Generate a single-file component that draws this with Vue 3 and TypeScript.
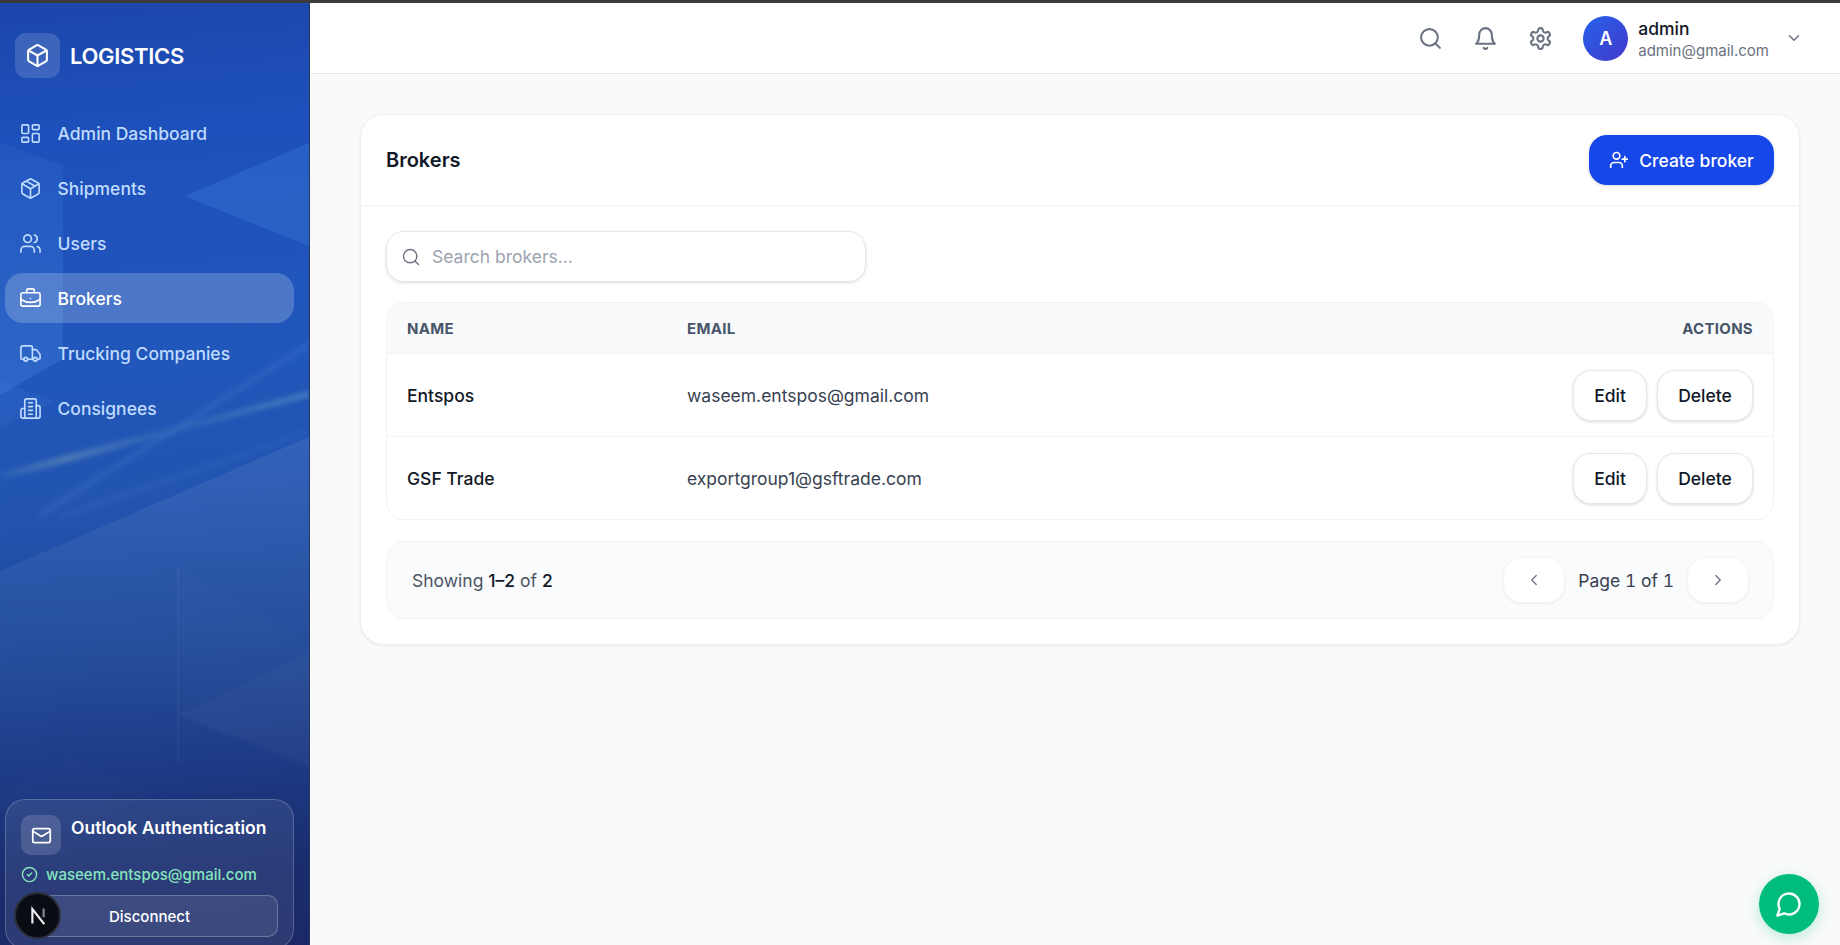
<script setup lang="ts">
interface NavItem {
  label: string
  icon: string
  active?: boolean
}

interface Broker {
  name: string
  email: string
}

const navItems: NavItem[] = [
  { label: 'Admin Dashboard', icon: 'dashboard' },
  { label: 'Shipments', icon: 'package' },
  { label: 'Users', icon: 'users' },
  { label: 'Brokers', icon: 'briefcase', active: true },
  { label: 'Trucking Companies', icon: 'truck' },
  { label: 'Consignees', icon: 'building' },
]

const brokers: Broker[] = [
  { name: 'Entspos', email: 'waseem.entspos@gmail.com' },
  { name: 'GSF Trade', email: 'exportgroup1@gsftrade.com' },
]
</script>

<template>
  <div class="page">
    <div class="browser-line"></div>
    <div class="shell">
      <aside class="sidebar">
        <svg class="sidebar-art" viewBox="0 0 310 942" preserveAspectRatio="none" aria-hidden="true">
          <defs>
            <linearGradient id="streak" x1="0" y1="1" x2="1" y2="0">
              <stop offset="0" stop-color="#9fd8d0" stop-opacity="0.05" />
              <stop offset="0.22" stop-color="#b8dcb8" stop-opacity="0.3" />
              <stop offset="0.55" stop-color="#9fd8d0" stop-opacity="0.08" />
              <stop offset="1" stop-color="#9fd8d0" stop-opacity="0.3" />
            </linearGradient>
            <linearGradient id="band" x1="0" y1="0" x2="0" y2="1">
              <stop offset="0" stop-color="#ffffff" stop-opacity="0.075" />
              <stop offset="1" stop-color="#ffffff" stop-opacity="0" />
            </linearGradient>
            <linearGradient id="left-shape" x1="0" y1="0" x2="0" y2="1">
              <stop offset="0" stop-color="#60a5fa" stop-opacity="0.08" />
              <stop offset="1" stop-color="#60a5fa" stop-opacity="0.2" />
            </linearGradient>
            <filter id="soft" x="-10%" y="-50%" width="120%" height="200%">
              <feGaussianBlur stdDeviation="2.4" />
            </filter>
          </defs>
          <polygon points="0,139 63,163 63,356 0,392" fill="url(#left-shape)" />
          <polygon points="185,193 310,140 310,243" fill="#60a5fa" opacity="0.17" />
          <polygon points="0,378 55,398 0,425" fill="#60a5fa" opacity="0.08" />
          <polygon points="0,470 310,388 310,394 0,477" fill="url(#streak)" filter="url(#soft)" />
          <polygon points="40,508 310,338 310,345 40,516" fill="#93c5fd" opacity="0.09" filter="url(#soft)" />
          <polygon points="60,510 310,425 310,432 60,518" fill="#93c5fd" opacity="0.05" filter="url(#soft)" />
          <polygon points="0,568 310,434 310,790 0,800" fill="url(#band)" />
          <polygon points="178,562 310,640 310,760 178,712" fill="#ffffff" opacity="0.012" />
          <polygon points="178,565 179,565 179,760 178,760" fill="#ffffff" opacity="0.07" />
          <polygon points="178,712 310,650 310,765" fill="#ffffff" opacity="0.025" />
          <polygon points="0,790 70,755 155,790 70,830 0,810" fill="#ffffff" opacity="0.012" />
        </svg>

        <div class="brand">
          <span class="brand-mark">
            <svg class="icon brand-icon" viewBox="0 0 24 24">
              <path d="M11 21.73a2 2 0 0 0 2 0l7-4A2 2 0 0 0 21 16V8a2 2 0 0 0-1-1.73l-7-4a2 2 0 0 0-2 0l-7 4A2 2 0 0 0 3 8v8a2 2 0 0 0 1 1.73z" />
              <path d="m3.3 7 8.7 5 8.7-5" />
              <path d="M12 22V12" />
            </svg>
          </span>
          <span class="brand-name">LOGISTICS</span>
        </div>

        <nav class="nav">
          <a v-for="item in navItems" :key="item.label" class="nav-item" :class="{ active: item.active }">
            <svg class="icon nav-icon" viewBox="0 0 24 24">
              <template v-if="item.icon === 'dashboard'">
                <rect x="3" y="3" width="7" height="9" rx="1" />
                <rect x="14" y="3" width="7" height="5" rx="1" />
                <rect x="14" y="12" width="7" height="9" rx="1" />
                <rect x="3" y="16" width="7" height="5" rx="1" />
              </template>
              <template v-else-if="item.icon === 'package'">
                <path d="M11 21.73a2 2 0 0 0 2 0l7-4A2 2 0 0 0 21 16V8a2 2 0 0 0-1-1.73l-7-4a2 2 0 0 0-2 0l-7 4A2 2 0 0 0 3 8v8a2 2 0 0 0 1 1.73z" />
                <path d="M12 22V12" />
                <path d="m3.3 7 7.703 4.734a2 2 0 0 0 1.994 0L20.7 7" />
                <path d="m7.5 4.27 9 5.15" />
              </template>
              <template v-else-if="item.icon === 'users'">
                <path d="M16 21v-2a4 4 0 0 0-4-4H6a4 4 0 0 0-4 4v2" />
                <circle cx="9" cy="7" r="4" />
                <path d="M22 21v-2a4 4 0 0 0-3-3.87" />
                <path d="M16 3.13a4 4 0 0 1 0 7.75" />
              </template>
              <template v-else-if="item.icon === 'briefcase'">
                <path d="M12 12h.01" />
                <path d="M16 6V4a2 2 0 0 0-2-2h-4a2 2 0 0 0-2 2v2" />
                <path d="M22 13a18.15 18.15 0 0 1-20 0" />
                <rect x="2" y="6" width="20" height="14" rx="2" />
              </template>
              <template v-else-if="item.icon === 'truck'">
                <path d="M14 18V6a2 2 0 0 0-2-2H4a2 2 0 0 0-2 2v11a1 1 0 0 0 1 1h2" />
                <path d="M15 18H9" />
                <path d="M19 18h2a1 1 0 0 0 1-1v-3.65a1 1 0 0 0-.22-.624l-3.48-4.35A1 1 0 0 0 17.52 8H14" />
                <circle cx="17" cy="18" r="2" />
                <circle cx="7" cy="18" r="2" />
              </template>
              <template v-else>
                <path d="M6 22V4a2 2 0 0 1 2-2h8a2 2 0 0 1 2 2v18Z" />
                <path d="M6 12H4a2 2 0 0 0-2 2v6a2 2 0 0 0 2 2h2" />
                <path d="M18 9h2a2 2 0 0 1 2 2v9a2 2 0 0 1-2 2h-2" />
                <path d="M10 6h4" />
                <path d="M10 10h4" />
                <path d="M10 14h4" />
                <path d="M10 18h4" />
              </template>
            </svg>
            <span>{{ item.label }}</span>
          </a>
        </nav>

        <section class="auth-card">
          <div class="auth-head">
            <span class="auth-mark">
              <svg class="icon auth-icon" viewBox="0 0 24 24">
                <rect x="2" y="4" width="20" height="16" rx="2" />
                <path d="m22 7-8.97 5.7a1.94 1.94 0 0 1-2.06 0L2 7" />
              </svg>
            </span>
            <span class="auth-title">Outlook Authentication</span>
          </div>
          <div class="auth-email">
            <svg class="icon check-icon" viewBox="0 0 24 24">
              <circle cx="12" cy="12" r="10" />
              <path d="m9 12 2 2 4-4" />
            </svg>
            <span>waseem.entspos@gmail.com</span>
          </div>
          <button class="disconnect" type="button">Disconnect</button>
        </section>

        <div class="next-badge">
          <svg viewBox="0 0 24 24" class="next-logo">
            <path d="M7.5 18V6.5L17 18.5" />
            <path class="next-stem" d="M16.5 6v7" />
          </svg>
        </div>
      </aside>

      <div class="main">
        <header class="topbar">
          <svg class="icon top-icon" viewBox="0 0 24 24">
            <circle cx="11" cy="11" r="8" />
            <path d="m21 21-4.3-4.3" />
          </svg>
          <svg class="icon top-icon" viewBox="0 0 24 24">
            <path d="M6 8a6 6 0 0 1 12 0c0 7 3 9 3 9H3s3-2 3-9" />
            <path d="M10.3 21a1.94 1.94 0 0 0 3.4 0" />
          </svg>
          <svg class="icon top-icon" viewBox="0 0 24 24">
            <path d="M12.22 2h-.44a2 2 0 0 0-2 2v.18a2 2 0 0 1-1 1.73l-.43.25a2 2 0 0 1-2 0l-.15-.08a2 2 0 0 0-2.73.73l-.22.38a2 2 0 0 0 .73 2.73l.15.1a2 2 0 0 1 1 1.72v.51a2 2 0 0 1-1 1.74l-.15.09a2 2 0 0 0-.73 2.73l.22.38a2 2 0 0 0 2.73.73l.15-.08a2 2 0 0 1 2 0l.43.25a2 2 0 0 1 1 1.73V20a2 2 0 0 0 2 2h.44a2 2 0 0 0 2-2v-.18a2 2 0 0 1 1-1.73l.43-.25a2 2 0 0 1 2 0l.15.08a2 2 0 0 0 2.73-.73l.22-.39a2 2 0 0 0-.73-2.73l-.15-.08a2 2 0 0 1-1-1.74v-.5a2 2 0 0 1 1-1.74l.15-.09a2 2 0 0 0 .73-2.73l-.22-.38a2 2 0 0 0-2.73-.73l-.15.08a2 2 0 0 1-2 0l-.43-.25a2 2 0 0 1-1-1.73V4a2 2 0 0 0-2-2z" />
            <circle cx="12" cy="12" r="3" />
          </svg>
          <div class="account">
            <span class="avatar">A</span>
            <div class="account-text">
              <span class="account-name">admin</span>
              <span class="account-email">admin@gmail.com</span>
            </div>
            <svg class="icon account-chevron" viewBox="0 0 24 24">
              <path d="m6 9 6 6 6-6" />
            </svg>
          </div>
        </header>

        <main class="content">
          <section class="card">
            <div class="card-head">
              <h1>Brokers</h1>
              <button class="create-btn" type="button">
                <svg class="icon create-icon" viewBox="0 0 24 24">
                  <path d="M16 21v-2a4 4 0 0 0-4-4H6a4 4 0 0 0-4 4v2" />
                  <circle cx="9" cy="7" r="4" />
                  <path d="M19 8v6" />
                  <path d="M22 11h-6" />
                </svg>
                Create broker
              </button>
            </div>

            <div class="card-body">
              <label class="search">
                <svg class="icon search-icon" viewBox="0 0 24 24">
                  <circle cx="11" cy="11" r="8" />
                  <path d="m21 21-4.3-4.3" />
                </svg>
                <input type="text" placeholder="Search brokers..." />
              </label>

              <div class="table-wrap">
                <div class="row row-head">
                  <span>Name</span>
                  <span>Email</span>
                  <span class="actions-label">Actions</span>
                </div>
                <div v-for="broker in brokers" :key="broker.email" class="row">
                  <span class="cell-name">{{ broker.name }}</span>
                  <span class="cell-email">{{ broker.email }}</span>
                  <div class="actions">
                    <button class="ghost-btn edit" type="button">Edit</button>
                    <button class="ghost-btn delete" type="button">Delete</button>
                  </div>
                </div>
              </div>

              <div class="pager">
                <span class="showing">Showing <b>1–2</b> of <b>2</b></span>
                <div class="pager-controls">
                  <button class="page-btn" type="button" aria-label="Previous">
                    <svg class="icon page-icon" viewBox="0 0 24 24"><path d="m15 18-6-6 6-6" /></svg>
                  </button>
                  <span class="page-label">Page 1 of 1</span>
                  <button class="page-btn" type="button" aria-label="Next">
                    <svg class="icon page-icon" viewBox="0 0 24 24"><path d="m9 18 6-6-6-6" /></svg>
                  </button>
                </div>
              </div>
            </div>
          </section>
        </main>
      </div>
    </div>

    <button class="chat-btn" type="button" aria-label="Chat">
      <svg class="icon chat-icon" viewBox="0 0 24 24">
        <path d="M7.9 20A9 9 0 1 0 4 16.1L2 22Z" />
      </svg>
    </button>
  </div>
</template>

<style>
html,
body {
  margin: 0;
  height: 100%;
  overflow: hidden;
}
</style>

<style scoped>
.page {
  height: 945px;
  display: flex;
  flex-direction: column;
  font-family: Inter, "Liberation Sans", sans-serif;
  color: #111827;
  background: #f9fafb;
  overflow: hidden;
  position: relative;
}
.browser-line { height: 3px; background: #3b3b3b; flex-shrink: 0; }
.shell { flex: 1; display: flex; min-height: 0; }
.icon {
  fill: none;
  stroke: currentColor;
  stroke-width: 2;
  stroke-linecap: round;
  stroke-linejoin: round;
  flex-shrink: 0;
}

.sidebar {
  width: 310px;
  flex-shrink: 0;
  box-sizing: border-box;
  border-right: 1px solid #27365f;
  position: relative;
  overflow: hidden;
  display: flex;
  flex-direction: column;
  background: linear-gradient(175deg, #1b46aa 0%, #1e50bb 14%, #2157bb 38%, #2254b0 52%, #1f4a9c 66%, #1c3a85 80%, #1a2c6d 92%, #1b2a66 100%);
}
.sidebar-art { position: absolute; inset: 0; width: 100%; height: 100%; }
.brand, .nav, .auth-card { position: relative; }

.brand {
  display: flex;
  align-items: center;
  gap: 10px;
  padding: 30px 15px 0;
  height: 45px;
}
.brand-mark {
  width: 45px;
  height: 45px;
  border-radius: 11px;
  background: rgba(255, 255, 255, 0.15);
  display: flex;
  align-items: center;
  justify-content: center;
  color: #fff;
}
.brand-icon { width: 25px; height: 25px; }
.brand-name { font-size: 22px; font-weight: 600; letter-spacing: -0.3px; color: #fff; }

.nav {
  display: flex;
  flex-direction: column;
  gap: 5px;
  padding: 30px 15px 0 5px;
}
.nav-item {
  height: 50px;
  display: flex;
  align-items: center;
  gap: 15.5px;
  padding-left: 14px;
  border-radius: 18px;
  font-size: 17.5px;
  font-weight: 500;
  color: #bfdbfe;
}
.nav-icon { width: 23px; height: 23px; stroke-width: 1.7; }
.nav-item.active {
  background: rgba(255, 255, 255, 0.2);
  color: #fff;
}

.auth-card {
  margin: auto 15px -4px 5px;
  height: 150px;
  box-sizing: border-box;
  padding: 15px 15px 0;
  border: 1px solid rgba(255, 255, 255, 0.2);
  border-radius: 20px;
  background: rgba(255, 255, 255, 0.08);
  flex-shrink: 0;
}
.auth-head { display: flex; gap: 10px; }
.auth-mark {
  width: 40px;
  height: 40px;
  border-radius: 10px;
  background: rgba(255, 255, 255, 0.15);
  display: flex;
  align-items: center;
  justify-content: center;
  color: #fff;
}
.auth-icon { width: 21px; height: 21px; }
.auth-title { font-size: 17.5px; font-weight: 600; color: #fff; line-height: 26px; }
.auth-email {
  display: flex;
  align-items: center;
  gap: 8px;
  margin-top: 9px;
  font-size: 15px;
  font-weight: 500;
  color: #86e5bd;
  height: 20px;
}
.check-icon { width: 17px; height: 17px; }
.disconnect {
  display: block;
  margin-top: 11px;
  width: 257px;
  height: 42px;
  border: 1px solid rgba(255, 255, 255, 0.25);
  border-radius: 10px;
  background: rgba(255, 255, 255, 0.08);
  font: 500 15px Inter, sans-serif;
  color: #fff;
}
.next-badge {
  position: absolute;
  left: 14px;
  top: 889px;
  width: 47px;
  height: 47px;
  box-sizing: border-box;
  border: 2px solid #2c2f3a;
  border-radius: 50%;
  background: #0a0c14;
  display: flex;
  align-items: center;
  justify-content: center;
}
.next-logo { width: 30px; height: 30px; fill: none; stroke: #f2f2f2; stroke-width: 1.7; flex-shrink: 0; }
.next-stem { opacity: 0.55; }

.main { flex: 1; display: flex; flex-direction: column; min-width: 0; }
.topbar {
  height: 71px;
  flex-shrink: 0;
  box-sizing: border-box;
  background: #fff;
  border-bottom: 1px solid #e5e7eb;
  display: flex;
  align-items: center;
  justify-content: flex-end;
  padding-right: 37px;
  color: #6b7280;
  gap: 30px;
}
.top-icon { width: 25px; height: 25px; }
.account { display: flex; align-items: center; }
.avatar {
  width: 45px;
  height: 45px;
  border-radius: 50%;
  background: linear-gradient(135deg, #2563eb, #4338ca);
  color: #fff;
  font-size: 18px;
  font-weight: 600;
  display: flex;
  align-items: center;
  justify-content: center;
}
.account-text { display: flex; flex-direction: column; margin-left: 10px; padding-top: 2px; }
.account-name { font-size: 17.5px; font-weight: 500; color: #111827; line-height: 24px; }
.account-email { font-size: 15px; color: #6b7280; line-height: 20px; }
.account-chevron { width: 18px; height: 18px; margin-left: 16px; }

.content { flex: 1; padding: 40px 40px 0 50px; min-height: 0; }
.card {
  height: 531px;
  box-sizing: border-box;
  background: #fff;
  border: 1px solid #f0f1f4;
  border-radius: 24px;
  box-shadow: 0 1px 3px rgba(0, 0, 0, 0.08);
}
.card-head {
  height: 91px;
  box-sizing: border-box;
  border-bottom: 1px solid #f3f4f6;
  display: flex;
  align-items: center;
  justify-content: space-between;
  padding: 0 25px;
}
h1 { margin: 0; font-size: 20px; font-weight: 600; color: #111827; }
.create-btn {
  height: 50px;
  width: 185px;
  display: flex;
  align-items: center;
  justify-content: center;
  gap: 10px;
  border: none;
  border-radius: 18px;
  background: #1647e8;
  color: #fff;
  font: 500 17.5px Inter, sans-serif;
  box-shadow: 0 1px 3px rgba(0, 0, 0, 0.15);
}
.create-icon { width: 20px; height: 20px; }

.card-body { padding: 25px 25px 0; }
.search {
  width: 480px;
  height: 51px;
  box-sizing: border-box;
  border: 1px solid #e5e7eb;
  border-radius: 18px;
  box-shadow: 0 1px 3px rgba(0, 0, 0, 0.14);
  display: flex;
  align-items: center;
  gap: 9px;
  padding-left: 14px;
  color: #9ca3af;
}
.search-icon { width: 20px; height: 20px; stroke-width: 1.7; color: #6b7280; }
.search input {
  flex: 1;
  min-width: 0;
  border: none;
  outline: none;
  font: 400 17.5px Inter, sans-serif;
  background: transparent;
}
.search input::placeholder { color: #9ca3af; }

.table-wrap {
  margin-top: 20px;
  border: 1px solid #f1f2f5;
  border-radius: 18px;
  overflow: hidden;
}
.row {
  display: grid;
  grid-template-columns: 280px 1fr auto;
  align-items: center;
  height: 83px;
  box-sizing: border-box;
  padding: 0 20px;
  border-top: 1px solid #f3f4f6;
}
.row-head {
  height: 50px;
  border-top: none;
  background: #f9fafb;
  font-size: 15px;
  font-weight: 700;
  color: #475569;
  text-transform: uppercase;
  letter-spacing: 0.3px;
}
.actions-label { text-align: right; }
.cell-name { font-size: 17.5px; font-weight: 500; color: #111827; }
.cell-email { font-size: 17.5px; color: #374151; }
.actions { display: flex; gap: 10px; }
.ghost-btn {
  height: 51px;
  box-sizing: border-box;
  border: 1px solid #e5e7eb;
  border-radius: 18px;
  background: #fff;
  font: 500 17.5px Inter, sans-serif;
  color: #111827;
  box-shadow: 0 1px 3px rgba(0, 0, 0, 0.15);
}
.edit { width: 74px; }
.delete { width: 96px; }

.pager {
  margin-top: 21px;
  height: 78px;
  box-sizing: border-box;
  border: 1px solid #f1f2f5;
  border-radius: 20px;
  background: #fafbfd;
  display: flex;
  align-items: center;
  justify-content: space-between;
  padding: 0 24px 0 25px;
}
.showing { font-size: 17.5px; color: #4b5563; }
.showing b { font-weight: 500; color: #111827; }
.pager-controls { display: flex; align-items: center; gap: 13px; }
.page-label { font-size: 17.5px; color: #374151; font-variant-numeric: tabular-nums; }
.page-btn {
  width: 62px;
  height: 46px;
  border: 1px solid #f3f4f6;
  border-radius: 18px;
  background: #fff;
  color: #6b7280;
  display: flex;
  align-items: center;
  justify-content: center;
  box-shadow: 0 1px 2px rgba(0, 0, 0, 0.06);
}
.page-icon { width: 18px; height: 18px; stroke-width: 1.7; }

.chat-btn {
  position: absolute;
  left: 1759px;
  top: 874px;
  width: 60px;
  height: 60px;
  border: none;
  border-radius: 50%;
  background: #00bd7e;
  color: #fff;
  display: flex;
  align-items: center;
  justify-content: center;
  box-shadow: 0 4px 14px rgba(0, 189, 126, 0.25);
}
.chat-icon { width: 28px; height: 28px; }
</style>
